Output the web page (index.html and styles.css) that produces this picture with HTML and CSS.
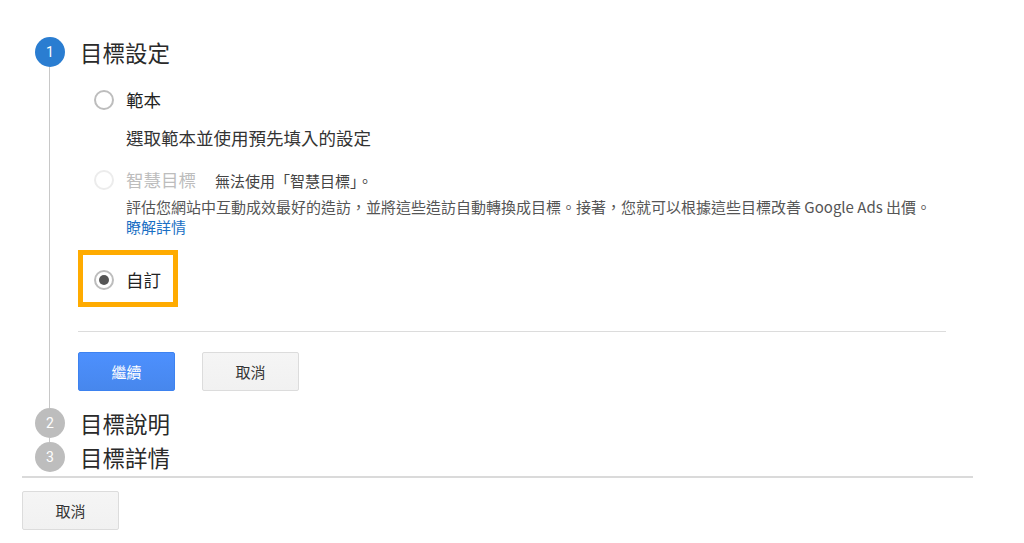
FILE: index.html
```html
<!DOCTYPE html>
<html lang="zh-Hant">
<head>
<meta charset="utf-8">
<link rel="stylesheet" href="styles.css">
</head>
<body>
<div class="page">
  <div class="stepper">
    <div class="step-head">
      <span class="step-num active">1</span>
      <span class="step-title">目標設定</span>
    </div>
    <div class="step-body">
      <div class="option">
        <span class="radio"></span>
        <span class="opt-label">範本</span>
      </div>
      <div class="opt-sub">選取範本並使用預先填入的設定</div>
      <div class="option smart">
        <span class="radio disabled"></span>
        <span class="opt-label muted">智慧目標</span>
        <span class="note">無法使用「智慧目標」。</span>
      </div>
      <div class="desc">評估您網站中互動成效最好的造訪，並將這些造訪自動轉換成目標。接著，您就可以根據這些目標改善 Google Ads 出價。</div>
      <a class="link" href="#">瞭解詳情</a>
      <div class="highlight">
        <div class="option">
          <span class="radio checked"></span>
          <span class="opt-label">自訂</span>
        </div>
      </div>
      <div class="divider"></div>
      <div class="actions">
        <button class="btn primary">繼續</button>
        <button class="btn">取消</button>
      </div>
    </div>
    <div class="step-head">
      <span class="step-num">2</span>
      <span class="step-title">目標說明</span>
    </div>
    <div class="step-gap"></div>
    <div class="step-head">
      <span class="step-num">3</span>
      <span class="step-title">目標詳情</span>
    </div>
  </div>
  <div class="footer-line"></div>
  <button class="btn footer-btn">取消</button>
</div>
</body>
</html>
```
FILE: styles.css
```css
* { box-sizing: border-box; }
html, body { margin: 0; padding: 0; background: #fff; }
body {
  font-family: "Noto Sans CJK TC", "Noto Sans", Roboto, sans-serif;
  color: #222;
}
.page {
  width: 951px;
  margin-left: 22px;
  padding-top: 37px;
}
.stepper { padding-left: 13px; }
.step-head {
  display: flex;
  align-items: center;
  height: 30px;
}
.step-num {
  width: 30px;
  height: 30px;
  border-radius: 50%;
  background: #bdbdbd;
  color: #fff;
  font-family: Roboto, "Noto Sans", sans-serif;
  font-size: 14px;
  display: flex;
  align-items: center;
  justify-content: center;
  flex: none;
}
.step-num.active { background: #2a7dd1; }
.step-title {
  margin-left: 15px;
  font-size: 22.5px;
  color: #2a2a2a;
  line-height: 30px;
}
.step-body {
  margin-left: 14px;
  border-left: 1px solid #c8c8c8;
  padding: 21px 0 17px 28px;
}
.step-gap {
  margin-left: 14px;
  border-left: 1px solid #c8c8c8;
  height: 4px;
}
.option {
  display: flex;
  align-items: center;
  height: 24px;
}
.radio {
  width: 20px;
  height: 20px;
  border-radius: 50%;
  border: 2px solid #bdbdbd;
  margin-left: 16px;
  flex: none;
  display: flex;
  align-items: center;
  justify-content: center;
}
.radio.disabled { border-color: #ececec; }
.radio.checked::after {
  content: "";
  width: 10px;
  height: 10px;
  border-radius: 50%;
  background: #555;
}
.opt-label {
  margin-left: 12px;
  font-size: 17.5px;
  line-height: 24px;
  color: #222;
}
.opt-label.muted { color: #bdbdbd; }
.opt-sub {
  margin-top: 16px;
  margin-left: 48px;
  font-size: 17.5px;
  line-height: 20px;
  color: #333;
}
.smart { margin-top: 20px; }
.note {
  margin-left: 19px;
  font-size: 15px;
  color: #444;
}
.desc {
  margin-left: 48px;
  margin-top: 5px;
  font-size: 15px;
  line-height: 20px;
  color: #555;
}
.link {
  display: block;
  margin-left: 48px;
  font-size: 15px;
  line-height: 20px;
  color: #1a6fc4;
  text-decoration: none;
}
.highlight {
  margin-top: 13px;
  width: 100px;
  height: 57px;
  border: 5px solid #ffab00;
  padding-top: 13px;
}
.highlight .radio { margin-left: 11px; }
.divider {
  margin-top: 24px;
  height: 1px;
  background: #dcdcdc;
  width: 868px;
}
.actions {
  display: flex;
  gap: 27px;
  margin-top: 20px;
}
.btn {
  width: 97px;
  height: 39px;
  border: 1px solid #dcdcdc;
  border-radius: 2px;
  background: linear-gradient(#f5f5f5, #f1f1f1);
  color: #333;
  font-family: "Noto Sans CJK TC", sans-serif;
  font-size: 15px;
  padding: 0;
}
.btn.primary {
  background: linear-gradient(#4d90fe, #4787ed);
  border-color: #3d82f0;
  color: #fff;
}
.footer-line {
  margin-top: 4px;
  height: 2px;
  background: #dadada;
}
.footer-btn { margin-top: 13px; }
```
